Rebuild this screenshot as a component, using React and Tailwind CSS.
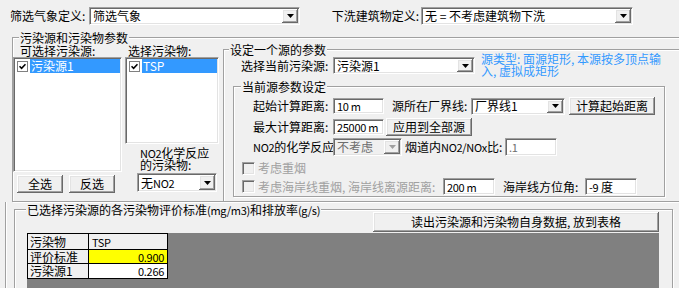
import React from 'react';

// classic win32 bevels
const sunken = 'border border-t-[#a0a0a0] border-l-[#a0a0a0] border-r-white border-b-white shadow-[inset_1px_1px_0_#696969,inset_-1px_-1px_0_#e3e3e3]';
const raised = 'bg-[#f0f0f0] shadow-[inset_-1px_-1px_0_#696969,inset_1px_1px_0_#ffffff,inset_-2px_-2px_0_#a0a0a0,inset_2px_2px_0_#e3e3e3]';

// latin runs are narrower in the original bitmap font
const L = ({ children }) => <span className="text-[11px] tracking-[-0.3px]">{children}</span>;

const Arrow = ({ dim }) => (
  <svg width="7" height="4" viewBox="0 0 7 4">
    <path d="M0 0h7L3.5 4z" fill={dim ? '#a0a0a0' : '#000'} />
  </svg>
);

const Combo = ({ className, value, dim }) => (
  <div className={`flex p-[1px] shrink-0 ${sunken} ${dim ? 'bg-[#f0f0f0] text-[#6d6d6d]' : 'bg-white'} ${className}`}>
    <span className="flex-1 flex items-center pl-[2px] whitespace-nowrap overflow-hidden">{value}</span>
    <span className={`w-[16px] flex items-center justify-center ${raised}`}>
      <Arrow dim={dim} />
    </span>
  </div>
);

const Field = ({ className, value, dim }) => (
  <div className={`flex items-center pl-[3px] bg-white whitespace-nowrap shrink-0 ${sunken} ${dim ? 'text-[#6d6d6d]' : ''} ${className}`}>
    <span>{value}</span>
  </div>
);

const Btn = ({ className, children }) => (
  <div className={`flex items-center justify-center whitespace-nowrap shrink-0 ${raised} ${className}`}>{children}</div>
);

const Tick = () => (
  <span className="w-[11px] h-[11px] shrink-0 bg-white border border-[#808080] flex items-center justify-center">
    <svg width="7" height="7" viewBox="0 0 7 7">
      <path d="M0.5 3.2L2.6 5.3L6.5 1.2" stroke="#000" strokeWidth="1.6" fill="none" />
    </svg>
  </span>
);

const DimBox = () => <span className={`w-[13px] h-[13px] shrink-0 bg-[#f0f0f0] ${sunken}`} />;

const ListBox = ({ className, label }) => (
  <div className={`bg-white p-[1px] shrink-0 ${sunken} ${className}`}>
    <div className="flex items-center h-[14px]">
      <span className="ml-[2px]"><Tick /></span>
      <span className="ml-[2px] flex-1 h-full flex items-center pl-[1px] bg-[#3399ff] text-white">{label}</span>
    </div>
  </div>
);

const Title = ({ className, children }) => (
  <span className={`absolute -top-[7px] bg-[#f0f0f0] px-[1px] leading-[13px] whitespace-nowrap ${className}`}>{children}</span>
);

const cell = 'border-r border-b border-black flex items-center whitespace-nowrap';

export default function App() {
  return (
    <div className="w-[679px] h-[288px] overflow-hidden bg-[#f0f0f0] text-[12px] leading-[14px] text-black font-['Noto_Sans_CJK_SC',sans-serif] flex flex-col">
      {/* 顶部两个下拉 */}
      <div className="flex items-center h-[18px] mt-[7px] shrink-0">
        <span className="ml-[10px] w-[79px] whitespace-nowrap">筛选气象定义:</span>
        <Combo className="w-[211px] h-[18px]" value="筛选气象" />
        <span className="w-[121px] text-right pr-[2px] whitespace-nowrap">下洗建筑物定义:</span>
        <Combo className="w-[212px] h-[18px]" value="无 = 不考虑建筑物下洗" />
      </div>

      {/* 污染源和污染物参数 */}
      <div className="relative mt-[12px] ml-[12px] w-[700px] h-[165px] shrink-0 border border-[#a0a0a0] shadow-[inset_1px_1px_0_#ffffff,1px_1px_0_#ffffff]">
        <Title className="left-[6px]">污染源和污染物参数</Title>
        <div className="flex h-full">
          <div className="w-[109px] flex flex-col shrink-0">
            <div className="mt-[6px] pl-[7px] h-[13px] leading-[13px] whitespace-nowrap">可选择污染源:</div>
            <ListBox className="w-[109px] h-[115px]" label="污染源1" />
            <div className="flex mt-[3px] pl-[4px] gap-[6px]">
              <Btn className="w-[46px] h-[18px]">全选</Btn>
              <Btn className="w-[46px] h-[18px]">反选</Btn>
            </div>
          </div>

          <div className="ml-[3px] w-[94px] flex flex-col shrink-0">
            <div className="mt-[6px] pl-[3px] h-[13px] leading-[13px] whitespace-nowrap">选择污染物:</div>
            <ListBox className="w-[94px] h-[87px]" label="TSP" />
            <div className="mt-[3px] pl-[15px] leading-[12px] whitespace-nowrap"><L>NO2</L>化学反应<br />的污染物:</div>
            <Combo className="mt-[2px] ml-[12px] w-[80px] h-[19px]" value={<>无<L>NO2</L></>} />
          </div>

          {/* 设定一个源的参数 */}
          <div className="relative ml-[4px] mt-[11px] flex-1 border-t border-l border-[#a0a0a0] shadow-[inset_1px_1px_0_#ffffff] flex flex-col">
            <Title className="left-[5px]">设定一个源的参数</Title>
            <div className="flex mt-[3px] h-[24px]">
              <div className="flex items-center mt-[4px] h-[17px]">
                <span className="pl-[17px] w-[109px] whitespace-nowrap">选择当前污染源:</span>
                <Combo className="w-[142px] h-[17px]" value="污染源1" />
              </div>
              <div className="ml-[6px] leading-[12px] text-[#3399ff] whitespace-nowrap">
                源类型: 面源矩形, 本源按多顶点输<br />入, 虚拟成矩形
              </div>
            </div>

            <div className="relative mt-[9px] ml-[9px] w-[432px] h-[111px] border border-[#a0a0a0] shadow-[inset_1px_1px_0_#ffffff,1px_1px_0_#ffffff] flex flex-col">
              <Title className="left-[7px]">当前源参数设定</Title>
              <div className="flex items-center mt-[10px] h-[18px]">
                <span className="pl-[19px] w-[99px] whitespace-nowrap">起始计算距离:</span>
                <Field className="w-[51px] h-[16px]" value={<L>10 m</L>} />
                <span className="ml-[8px] w-[79px] whitespace-nowrap">源所在厂界线:</span>
                <Combo className="w-[94px] h-[17px]" value="厂界线1" />
                <Btn className="ml-[4px] w-[86px] h-[18px]">计算起始距离</Btn>
              </div>
              <div className="flex items-center mt-[3px] h-[18px]">
                <span className="pl-[19px] w-[99px] whitespace-nowrap">最大计算距离:</span>
                <Field className="w-[51px] h-[16px]" value={<L>25000 m</L>} />
                <Btn className="ml-[2px] w-[86px] h-[18px]">应用到全部源</Btn>
              </div>
              <div className="flex items-center mt-[2px] h-[18px]">
                <span className="pl-[19px] w-[99px] whitespace-nowrap"><L>NO2</L>的化学反应</span>
                <Combo className="w-[69px] h-[18px]" value="不考虑" dim />
                <span className="ml-[3px] w-[100px] whitespace-nowrap">烟道内<L>NO2/NOx</L>比:</span>
                <Field className="w-[52px] h-[18px]" value={<L>.1</L>} dim />
              </div>
              <div className="flex items-center mt-[5px] h-[14px] text-[#a0a0a0]">
                <span className="ml-[8px] flex"><DimBox /></span>
                <span className="ml-[3px] whitespace-nowrap">考虑重烟</span>
              </div>
              <div className="flex items-center mt-[3px] h-[17px]">
                <span className="ml-[8px] flex"><DimBox /></span>
                <span className="ml-[3px] w-[185px] whitespace-nowrap text-[#a0a0a0]">考虑海岸线重烟, 海岸线离源距离:</span>
                <Field className="w-[52px] h-[17px]" value={<L>200 m</L>} />
                <span className="ml-[8px] w-[82px] whitespace-nowrap">海岸线方位角:</span>
                <Field className="w-[52px] h-[17px]" value={<><L>-9</L>{'\u00a0'}度</>} />
              </div>
            </div>
          </div>
        </div>
      </div>

      {/* 评价标准和排放率 */}
      <div className="flex-1 ml-[5px] border-l border-[#a0a0a0] shadow-[inset_1px_0_0_#ffffff] flex flex-col">
        <div className="relative mt-[7px] ml-[8px] w-[659px] h-[100px] border border-[#a0a0a0] shadow-[inset_1px_1px_0_#ffffff,1px_1px_0_#ffffff] flex flex-col">
          <Title className="left-[11px]">已选择污染源的各污染物评价标准<L>(mg/m3)</L>和排放率<L>(g/s)</L></Title>
          <Btn className="mt-[2px] ml-[358px] w-[286px] h-[20px]">读出污染源和污染物自身数据, 放到表格</Btn>
          <div className="mt-[1px] ml-[12px] w-[632px] flex-1 bg-[#808080]">
            <div className="grid grid-cols-[61px_79px] w-[141px] border-l border-t border-black">
              <div className={`${cell} h-[16px] bg-[#f0f0f0] pl-[2px]`}>污染物</div>
              <div className={`${cell} h-[16px] bg-[#f0f0f0] pl-[3px]`}><L>TSP</L></div>
              <div className={`${cell} h-[14px] bg-[#f0f0f0] pl-[2px]`}>评价标准</div>
              <div className={`${cell} h-[14px] bg-[#ffff00] justify-end pr-[3px]`}><L>0.900</L></div>
              <div className={`${cell} h-[15px] bg-[#f0f0f0] pl-[2px]`}>污染源1</div>
              <div className={`${cell} h-[15px] bg-white justify-end pr-[3px]`}><L>0.266</L></div>
            </div>
          </div>
        </div>
      </div>
    </div>
  );
}
